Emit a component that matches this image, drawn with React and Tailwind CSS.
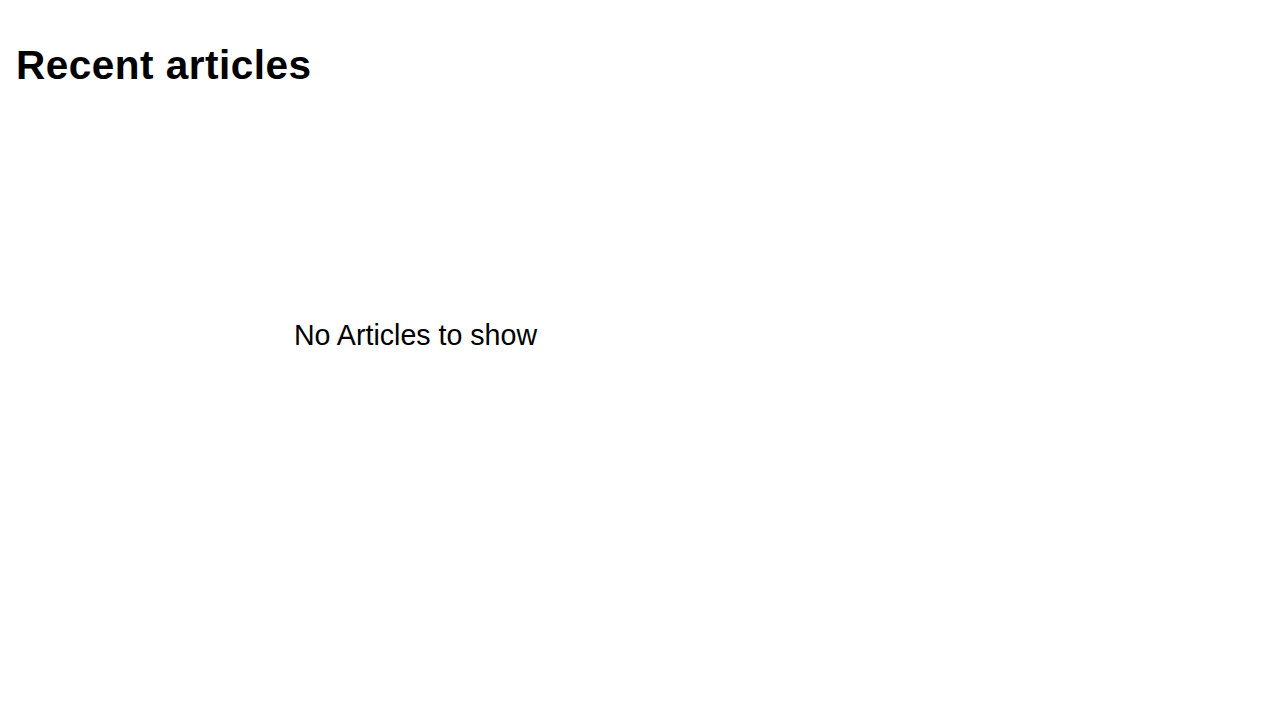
export default function App() {
  return (
    <div className="min-h-screen bg-white text-black" style={{ fontFamily: '"Liberation Sans", Helvetica, Arial, sans-serif' }}>
      <div className="px-4 pt-[41px]">
        <h1 className="text-[40.5px] font-bold leading-[1.2] tracking-[0.5px]">Recent articles</h1>
      </div>
      <div className="w-[831px] flex justify-center pt-[228px]">
        <p className="text-[28.6px] leading-[1.2]">No Articles to show</p>
      </div>
    </div>
  );
}
